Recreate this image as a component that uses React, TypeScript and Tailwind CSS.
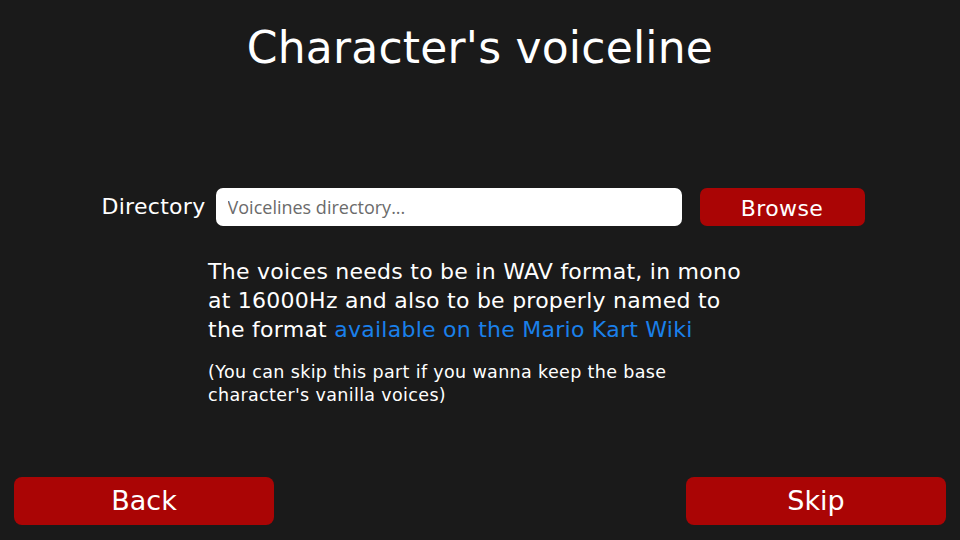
export default function App() {
  return (
    <div
      className="flex h-[540px] w-[960px] flex-col bg-[#1a1a1a] text-white"
      style={{ fontFamily: '"DejaVu Sans", "Noto Sans", sans-serif' }}
    >
      <h1 className="pt-[16px] text-center text-[44px] leading-[64px] tracking-[0.2px]">
        Character's voiceline
      </h1>

      <div className="mt-[108px] flex items-center justify-center pl-[6px]">
        <span className="mr-[10px] text-[22px] leading-[30px] tracking-[0.3px]">
          Directory
        </span>
        <input
          className="h-[38px] w-[466px] rounded-[7px] bg-white px-[12px] text-[18px] text-[#333] outline-none placeholder:text-[#6b6b6b]"
          style={{ fontFamily: '"Open Sans", sans-serif' }}
          placeholder="Voicelines directory..."
        />
        <button className="ml-[18px] h-[38px] w-[165px] rounded-[7px] bg-[#aa0505] pt-[2px] text-[22px] tracking-[0.4px]">
          Browse
        </button>
      </div>

      <div className="mx-auto mt-[31px] w-[544px]">
        <p className="whitespace-nowrap text-[22px] leading-[29px] tracking-[0.25px]">
          The voices needs to be in WAV format, in mono
          <br />
          at 16000Hz and also to be properly named to
          <br />
          the format{" "}
          <a className="text-[#1a80ea]" href="#">
            available on the Mario Kart Wiki
          </a>
        </p>
        <p className="mt-[17px] whitespace-nowrap text-[17.5px] leading-[23px] tracking-[0.35px]">
          (You can skip this part if you wanna keep the base
          <br />
          character's vanilla voices)
        </p>
      </div>

      <div className="mt-auto flex justify-between px-[14px] pb-[15px]">
        <button className="h-[48px] w-[260px] rounded-[8px] bg-[#aa0505] text-[27px]">
          Back
        </button>
        <button className="h-[48px] w-[260px] rounded-[8px] bg-[#aa0505] text-[27px]">
          Skip
        </button>
      </div>
    </div>
  );
}
